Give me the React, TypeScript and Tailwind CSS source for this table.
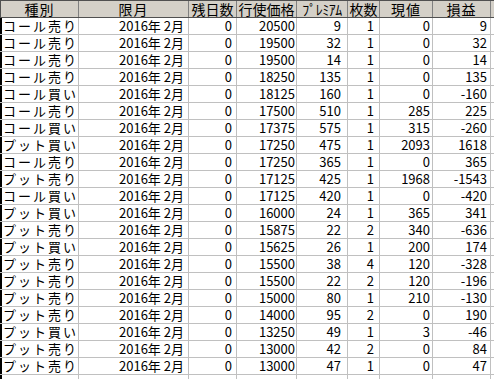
import React from 'react';

type Row = [string, string, string, string, string, string];

const rows: Row[] = [
    ['コール売り', '20500', '9', '1', '0', '9'],
    ['コール売り', '19500', '32', '1', '0', '32'],
    ['コール売り', '19500', '14', '1', '0', '14'],
    ['コール売り', '18250', '135', '1', '0', '135'],
    ['コール買い', '18125', '160', '1', '0', '-160'],
    ['コール売り', '17500', '510', '1', '285', '225'],
    ['コール買い', '17375', '575', '1', '315', '-260'],
    ['プット買い', '17250', '475', '1', '2093', '1618'],
    ['コール売り', '17250', '365', '1', '0', '365'],
    ['プット売り', '17125', '425', '1', '1968', '-1543'],
    ['コール買い', '17125', '420', '1', '0', '-420'],
    ['プット買い', '16000', '24', '1', '365', '341'],
    ['プット売り', '15875', '22', '2', '340', '-636'],
    ['プット買い', '15625', '26', '1', '200', '174'],
    ['プット売り', '15500', '38', '4', '120', '-328'],
    ['プット売り', '15500', '22', '2', '120', '-196'],
    ['プット売り', '15000', '80', '1', '210', '-130'],
    ['プット売り', '14000', '95', '2', '0', '190'],
    ['プット買い', '13250', '49', '1', '3', '-46'],
    ['プット売り', '13000', '42', '2', '0', '84'],
    ['プット売り', '13000', '47', '1', '0', '47'],
];

const headCell = "h-full shrink-0 flex items-center justify-center whitespace-nowrap border-r border-[#808080] text-[14px] leading-[16px] text-black";
const cell = "h-full shrink-0 flex items-center whitespace-nowrap border-r border-[#c0c0c0] text-[13px] leading-[16px] text-black";

const App = () => {
    return (
        <div className="w-[494px] h-[379px] overflow-hidden bg-white font-['Noto_Sans_CJK_JP']">
            {/* Header */}
            <div className="flex h-[18px] bg-[#d4d0c8] border-t border-b border-[#505050]">
                <div className={`${headCell} w-[79px] border-l border-l-[#505050] tracking-[1px]`}>種別</div>
                <div className={`${headCell} w-[110px] tracking-[1px]`}>限月</div>
                <div className={`${headCell} w-[48px] text-[13px]`}>残日数</div>
                <div className={`${headCell} w-[60px] text-[13px]`}>行使価格</div>
                <div className={`${headCell} w-[51px] text-[12px] tracking-[-0.5px]`}>ﾌﾟﾚﾐｱﾑ</div>
                <div className={`${headCell} w-[32px] text-[13px]`}>枚数</div>
                <div className={`${headCell} w-[53px] tracking-[1px]`}>現値</div>
                <div className={`${headCell} w-[58px] tracking-[1px]`}>損益</div>
                <div className="flex-1" />
            </div>

            {/* Rows */}
            {rows.map((r, i) => (
                <div key={i} className="flex h-[17px] border-b border-[#c0c0c0]">
                    <div className={`${cell} w-[79px] border-l-2 border-l-black pl-[1px] tracking-[2px]`}>{r[0]}</div>
                    <div className={`${cell} w-[110px] justify-end pr-[4px]`}>2016年 2月</div>
                    <div className={`${cell} w-[48px] justify-end pr-[4px]`}>0</div>
                    <div className={`${cell} w-[60px] justify-end pr-[1px]`}>{r[1]}</div>
                    <div className={`${cell} w-[51px] justify-end pr-[6px]`}>{r[2]}</div>
                    <div className={`${cell} w-[32px] justify-end pr-[5px]`}>{r[3]}</div>
                    <div className={`${cell} w-[53px] justify-end pr-[2px]`}>{r[4]}</div>
                    <div className={`${cell} w-[58px] justify-end pr-[3px]`}>{r[5]}</div>
                    <div className="flex-1" />
                </div>
            ))}

            {/* Partial row */}
            <div className="flex h-[17px]">
                <div className={`${cell} w-[79px] border-l-2 border-l-black`} />
                <div className={`${cell} w-[110px]`} />
                <div className={`${cell} w-[48px]`} />
                <div className={`${cell} w-[60px]`} />
                <div className={`${cell} w-[51px]`} />
                <div className={`${cell} w-[32px]`} />
                <div className={`${cell} w-[53px]`} />
                <div className={`${cell} w-[58px]`} />
                <div className="flex-1" />
            </div>
        </div>
    );
};

export default App;
